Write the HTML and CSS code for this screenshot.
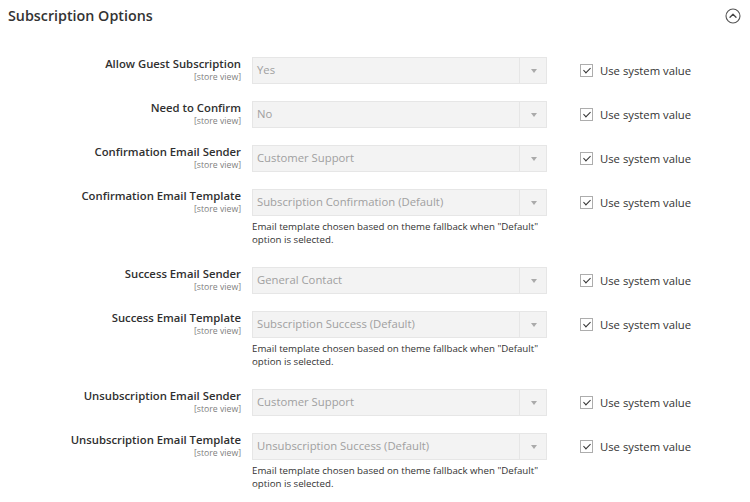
FILE: index.html
```html
<!DOCTYPE html>
<html lang="en">
<head>
    <meta charset="UTF-8">
    <title>Subscription Options</title>
    <link rel="stylesheet" href="styles.css">
</head>
<body>
    <div class="section">
        <div class="section-head">
            <h2>Subscription Options</h2>
            <svg class="collapse-icon" width="16" height="16" viewBox="0 0 16 16">
                <circle cx="8" cy="8" r="7" fill="none" stroke="#555" stroke-width="1.1"/>
                <path d="M5 9.3 L8 6.3 L11 9.3" fill="none" stroke="#444" stroke-width="1.3" stroke-linecap="round" stroke-linejoin="round"/>
            </svg>
        </div>

        <div class="fields">
            <div class="row">
                <div class="label">Allow Guest Subscription<span class="scope">[store view]</span></div>
                <div class="value">
                    <div class="select"><span>Yes</span><i class="arrow"></i></div>
                </div>
                <label class="use-default"><span class="checkbox"></span>Use system value</label>
            </div>

            <div class="row">
                <div class="label">Need to Confirm<span class="scope">[store view]</span></div>
                <div class="value">
                    <div class="select"><span>No</span><i class="arrow"></i></div>
                </div>
                <label class="use-default"><span class="checkbox"></span>Use system value</label>
            </div>

            <div class="row">
                <div class="label">Confirmation Email Sender<span class="scope">[store view]</span></div>
                <div class="value">
                    <div class="select"><span>Customer Support</span><i class="arrow"></i></div>
                </div>
                <label class="use-default"><span class="checkbox"></span>Use system value</label>
            </div>

            <div class="row">
                <div class="label">Confirmation Email Template<span class="scope">[store view]</span></div>
                <div class="value">
                    <div class="select"><span>Subscription Confirmation (Default)</span><i class="arrow"></i></div>
                    <p class="note">Email template chosen based on theme fallback when "Default" option is selected.</p>
                </div>
                <label class="use-default"><span class="checkbox"></span>Use system value</label>
            </div>

            <div class="row">
                <div class="label">Success Email Sender<span class="scope">[store view]</span></div>
                <div class="value">
                    <div class="select"><span>General Contact</span><i class="arrow"></i></div>
                </div>
                <label class="use-default"><span class="checkbox"></span>Use system value</label>
            </div>

            <div class="row">
                <div class="label">Success Email Template<span class="scope">[store view]</span></div>
                <div class="value">
                    <div class="select"><span>Subscription Success (Default)</span><i class="arrow"></i></div>
                    <p class="note">Email template chosen based on theme fallback when "Default" option is selected.</p>
                </div>
                <label class="use-default"><span class="checkbox"></span>Use system value</label>
            </div>

            <div class="row">
                <div class="label">Unsubscription Email Sender<span class="scope">[store view]</span></div>
                <div class="value">
                    <div class="select"><span>Customer Support</span><i class="arrow"></i></div>
                </div>
                <label class="use-default"><span class="checkbox"></span>Use system value</label>
            </div>

            <div class="row">
                <div class="label">Unsubscription Email Template<span class="scope">[store view]</span></div>
                <div class="value">
                    <div class="select"><span>Unsubscription Success (Default)</span><i class="arrow"></i></div>
                    <p class="note">Email template chosen based on theme fallback when "Default" option is selected.</p>
                </div>
                <label class="use-default"><span class="checkbox"></span>Use system value</label>
            </div>
        </div>
    </div>
</body>
</html>
```

FILE: styles.css
```css
* {
    margin: 0;
    padding: 0;
    box-sizing: border-box;
}

body {
    font-family: 'Open Sans', 'Liberation Sans', sans-serif;
    background: #fff;
    color: #303030;
}

.section-head {
    display: flex;
    justify-content: space-between;
    align-items: center;
    padding: 3px 9px 0 8px;
    height: 27px;
}

.section-head h2 {
    font-size: 14.3px;
    font-weight: 600;
    color: #333;
}

.collapse-icon {
    margin-top: 2px;
}

.fields {
    padding-top: 30px;
}

.row {
    display: flex;
    align-items: flex-start;
    margin-bottom: 17px;
}

.label {
    width: 241px;
    text-align: right;
    font-size: 11.3px;
    font-weight: 600;
    line-height: 14px;
    color: #303030;
}

.scope {
    display: block;
    font-size: 8.7px;
    font-weight: 400;
    line-height: 10px;
    margin-top: 1px;
    color: #808080;
}

.value {
    width: 295px;
    margin-left: 11px;
}

.select {
    position: relative;
    height: 27px;
    background: #f3f3f3;
    border: 1px solid #e6e6e6;
    font-size: 11.3px;
    line-height: 24px;
    color: #a0a0a0;
    padding-left: 4px;
}

.arrow {
    position: absolute;
    top: 0;
    right: 0;
    width: 27px;
    height: 25px;
    border-left: 1px solid #e6e6e6;
}

.arrow::after {
    content: '';
    position: absolute;
    left: 11px;
    top: 11px;
    border-left: 3px solid transparent;
    border-right: 3px solid transparent;
    border-top: 4px solid #aaa;
}

.note {
    font-size: 9.7px;
    line-height: 13px;
    color: #333;
    margin-top: 4px;
    margin-bottom: 4px;
}

.use-default {
    display: flex;
    align-items: center;
    margin-left: 33px;
    height: 26px;
    font-size: 11.3px;
    color: #333;
}

.checkbox {
    position: relative;
    width: 13px;
    height: 13px;
    border: 1px solid #adadad;
    background: #fff;
    margin-right: 7px;
}

.checkbox::after {
    content: '';
    position: absolute;
    left: 3.5px;
    top: 1.5px;
    width: 3px;
    height: 6px;
    border-right: 1.6px solid #333;
    border-bottom: 1.6px solid #333;
    transform: rotate(45deg);
}
```
